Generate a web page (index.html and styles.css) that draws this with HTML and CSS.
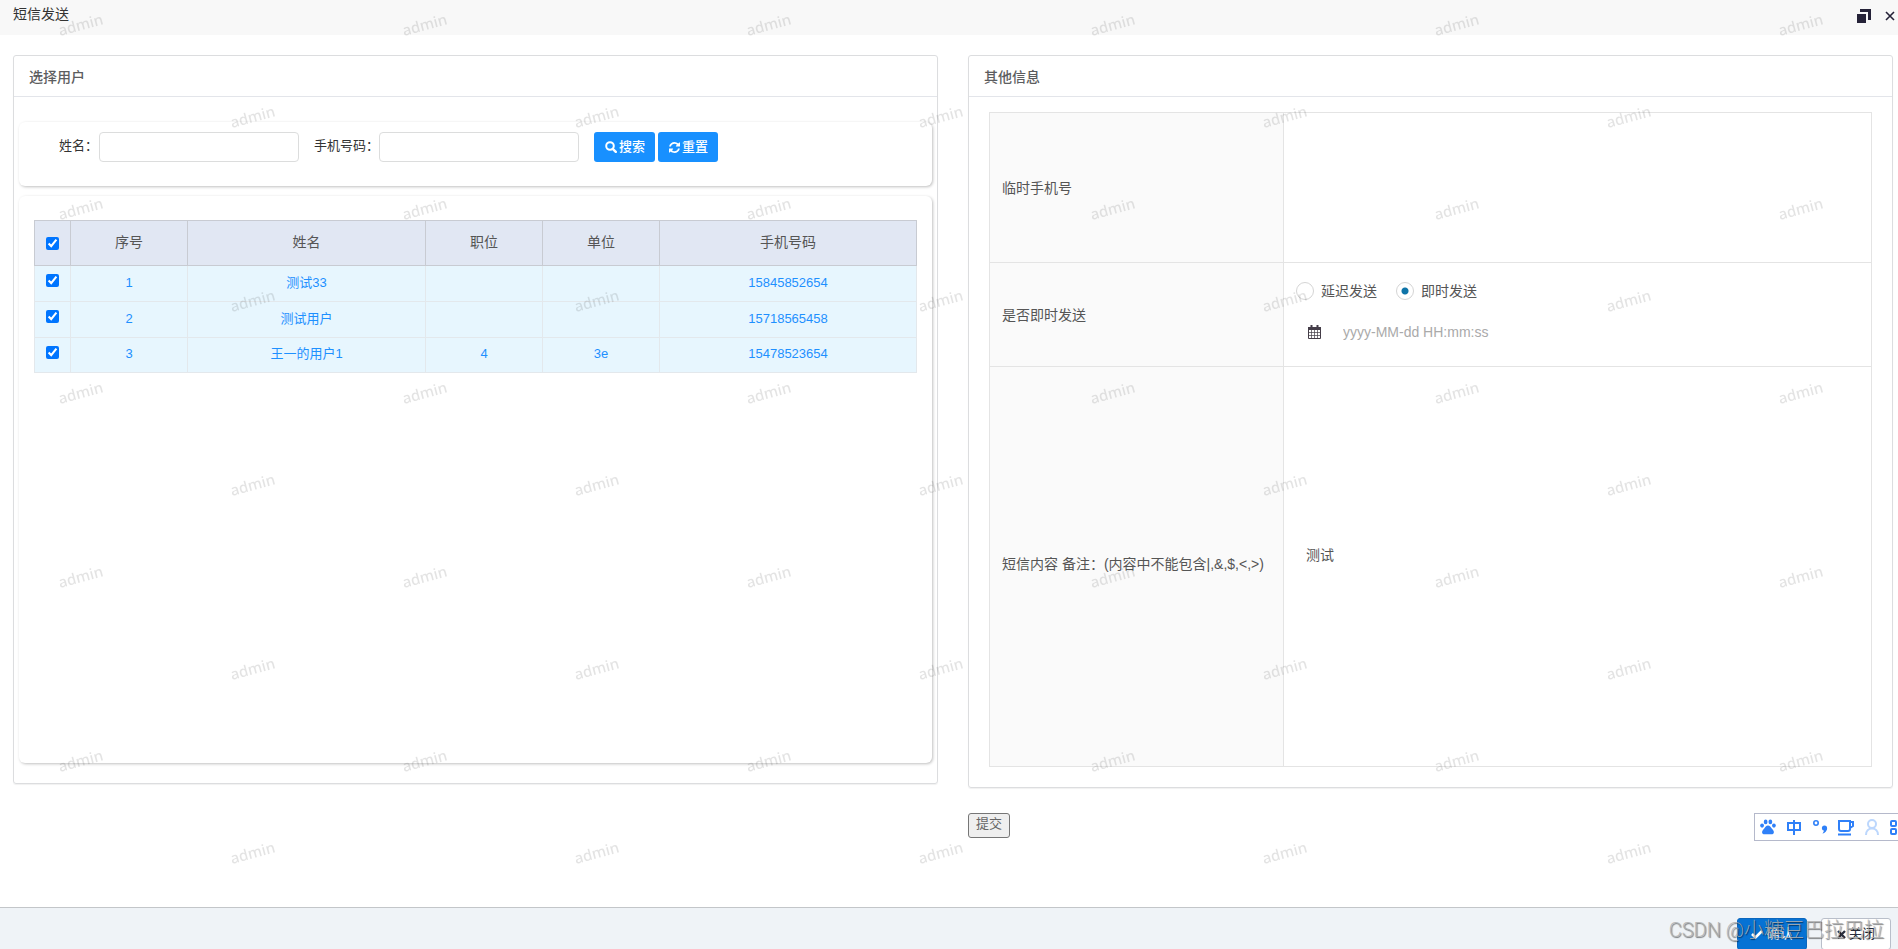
FILE: index.html
```html
<!DOCTYPE html>
<html lang="zh-CN">
<head>
<meta charset="utf-8">
<title>短信发送</title>
<link rel="stylesheet" href="styles.css">
</head>
<body>
<div class="window">
  <header class="titlebar">
    <h1 class="titlebar-text">短信发送</h1>
    <div class="titlebar-tools">
      <button class="tool" type="button" aria-label="还原"><svg width="14" height="14" viewBox="0 0 14 14"><path d="M0 5h9v9H0zM3 0h11v11h-3V3H3z" fill="#252238"/></svg></button>
      <button class="tool" type="button" aria-label="关闭"><svg width="10" height="10" viewBox="0 0 10 10"><path d="M1 1l8 8M9 1L1 9" stroke="#252238" stroke-width="1.600" fill="none"/></svg></button>
    </div>
  </header>

  <main class="content">
    <section class="panel">
      <h2 class="panel-head">选择用户</h2>
      <div class="users">
        <form class="card search">
          <label for="name">姓名：</label>
          <input class="field" id="name" type="text">
          <label class="label-next" for="phone">手机号码：</label>
          <input class="field" id="phone" type="text">
          <div class="search-actions">
            <button class="btn" type="button"><svg width="12" height="12" viewBox="0 0 12 12" fill="none" stroke="#fff"><circle cx="5" cy="5" r="3.8" stroke-width="2"/><path d="M7.8 7.8l3 3" stroke-width="2.4" stroke-linecap="round"/></svg>搜索</button>
            <button class="btn" type="button"><svg width="11" height="11" viewBox="0 0 1536 1536" fill="#fff"><path d="M1511 928q0 5-1 7-64 268-268 434.500T764 1536q-146 0-282.500-55T238 1324l-129 129q-19 19-45 19t-45-19-19-45V960q0-26 19-45t45-19h448q26 0 45 19t19 45-19 45l-137 137q71 66 161 102t187 36q134 0 250-65t186-179q11-17 53-117 8-23 30-23h192q13 0 22.500 9.500t9.500 22.500zm25-800v448q0 26-19 45t-45 19h-448q-26 0-45-19t-19-45 19-45l138-138Q969 256 768 256q-134 0-250 65T332 500q-11 17-53 117-8 23-30 23H50q-13 0-22.500-9.500T18 608v-7q65-268 270-434.500T768 0q146 0 284 55.500T1297 212l130-129q19-19 45-19t45 19 19 45z"/></svg>重置</button>
          </div>
        </form>
        <div class="card list">
          <table class="grid">
            <colgroup><col class="c-check"><col class="c-mid"><col class="c-name"><col class="c-mid"><col class="c-mid"><col></colgroup>
            <thead>
              <tr><th><input type="checkbox" checked aria-label="全选"></th><th>序号</th><th>姓名</th><th>职位</th><th>单位</th><th>手机号码</th></tr>
            </thead>
            <tbody>
              <tr><td><input type="checkbox" checked aria-label="选择 1"></td><td>1</td><td>测试33</td><td></td><td></td><td>15845852654</td></tr>
              <tr><td><input type="checkbox" checked aria-label="选择 2"></td><td>2</td><td>测试用户</td><td></td><td></td><td>15718565458</td></tr>
              <tr><td><input type="checkbox" checked aria-label="选择 3"></td><td>3</td><td>王一的用户1</td><td>4</td><td>3e</td><td>15478523654</td></tr>
            </tbody>
          </table>
        </div>
      </div>
    </section>

    <div class="right">
      <section class="panel">
        <h2 class="panel-head">其他信息</h2>
        <table class="info">
          <colgroup><col class="c-label"><col></colgroup>
          <tr class="row-phone"><th scope="row"><label for="temp">临时手机号</label></th><td><textarea class="bare" id="temp"></textarea></td></tr>
          <tr class="row-time"><th scope="row">是否即时发送</th><td>
            <div class="radios">
              <label class="radio"><input type="radio" name="when">延迟发送</label>
              <label class="radio"><input type="radio" name="when" checked>即时发送</label>
            </div>
            <div class="date">
              <svg width="13" height="14" viewBox="0 0 13 14"><path d="M.5 3h12v10.500H.5z" fill="none" stroke="#443d48"/><path d="M1 7.500h11M1 10.500h11M3.500 5v8M6.500 5v8M9.500 5v8" fill="none" stroke="#443d48" stroke-width=".7"/><path d="M0 2h13v3H0zM2.500 0h2v3h-2zM8.500 0h2v3h-2z" fill="#443d48"/></svg>
              <input class="bare" type="text" placeholder="yyyy-MM-dd HH:mm:ss" aria-label="发送时间">
            </div>
          </td></tr>
          <tr class="row-text"><th scope="row"><label for="text">短信内容 备注：(内容中不能包含|,&amp;,$,&lt;,&gt;)</label></th><td><input class="bare message" id="text" type="text" value="测试"></td></tr>
        </table>
      </section>
      <button class="submit" type="button">提交</button>
    </div>
  </main>

  <svg class="watermark" aria-hidden="true">
    <defs>
      <pattern id="mark" width="344" height="184" patternUnits="userSpaceOnUse">
        <text class="mark-text" transform="translate(82 30) rotate(-15)">admin</text>
        <text class="mark-text" transform="translate(254 122) rotate(-15)">admin</text>
      </pattern>
    </defs>
    <rect width="100%" height="100%" fill="url(#mark)"/>
  </svg>

  <div class="ime">
    <svg width="16" height="17" viewBox="0 0 17 17" fill="#2f80f8"><ellipse cx="2.200" cy="6.500" rx="2" ry="2.300"/><ellipse cx="6" cy="2.600" rx="2" ry="2.500"/><ellipse cx="11" cy="2.600" rx="2" ry="2.500"/><ellipse cx="14.800" cy="6.500" rx="2" ry="2.300"/><path d="M8.500 6.500c2 0 2.800 1.800 4.200 3.200 3 2.600 2.600 6-.4 6H4.700c-3 0-3.400-3.400-.4-6C5.700 8.300 6.500 6.500 8.500 6.500z"/></svg>
    <svg width="16" height="17" viewBox="0 0 16 17" fill="none" stroke="#2f80f8" stroke-width="2"><path d="M2 4h12v7H2zM8 1v15"/></svg>
    <svg width="16" height="17" viewBox="0 0 16 17" fill="#2f80f8"><circle cx="4" cy="4" r="2.200" fill="none" stroke="#2f80f8" stroke-width="1.600"/><circle cx="12.500" cy="9" r="2.600"/><path d="M15.100 9q0 4-4.600 5.800Q12.500 12 12 10z"/></svg>
    <svg width="16" height="17" viewBox="0 0 16 17" fill="none" stroke="#2f80f8" stroke-width="2"><path d="M1 2h11v8q0 2-2 2H3q-2 0-2-2zM12 3h3v4l-3 2M0 15.500h13"/></svg>
    <svg width="16" height="17" viewBox="0 0 16 17" fill="none" stroke="#bcd7fd" stroke-width="2"><circle cx="8" cy="5" r="4"/><path d="M2 16c0-4 2.500-6.500 6-6.500s6 2.500 6 6.500"/></svg>
    <svg width="16" height="17" viewBox="0 0 16 17" fill="none" stroke="#2f80f8" stroke-width="2"><rect x="1" y="2" width="5" height="5" rx="1"/><rect x="1" y="10" width="5" height="5" rx="1"/><rect x="9" y="2" width="5" height="5" rx="1"/><rect x="9" y="10" width="5" height="5" rx="1"/></svg>
  </div>

  <footer class="footer">
    <button class="foot-btn primary" type="button"><svg width="12" height="12" viewBox="0 0 12 12"><path d="M1 6l3.500 3.500L11 3" fill="none" stroke="#fff" stroke-width="2.600"/></svg>确认</button>
    <button class="foot-btn" type="button"><svg width="9" height="9" viewBox="0 0 9 9"><path d="M1 1l7 7M8 1L1 8" stroke="#2b2f3d" stroke-width="2.400"/></svg>关闭</button>
    <span class="credit">CSDN @小糖豆巴拉巴拉</span>
  </footer>
</div>
</body>
</html>
```
FILE: styles.css
```css
* { box-sizing: border-box; }
body {
  margin: 0;
  overflow: hidden;
  color: #333;
  background: #fff;
  font: 13px/20px "Liberation Sans", "Noto Sans CJK SC", sans-serif;
}
button, input, textarea { font: inherit; color: inherit; }
.window { position: relative; display: flex; flex-direction: column; height: 100vh; overflow: hidden; }

.titlebar { flex: none; display: flex; justify-content: space-between; height: 35px; padding: 4px 3px 0 13px; background: #f8f8f8; }
.titlebar-text { margin: 0; font-size: 14px; font-weight: 400; }
.titlebar-tools { display: flex; gap: 14px; align-items: center; height: 24px; }
.tool { display: flex; padding: 0; border: 0; background: none; }

.content { flex: 1; min-height: 0; display: grid; grid-template-columns: 1fr 1fr; gap: 30px; align-items: start; padding: 20px 5px 0 13px; }
.panel { border: 1px solid #dcdddf; border-radius: 3px; box-shadow: 0 1px 1px rgba(0,0,0,.06); }
.panel-head { margin: 0; padding: 11px 15px 9px; border-bottom: 1px solid #e3e5ea; color: #5c5d60; font-size: 14px; font-weight: 500; }

.users { padding: 25px 5px 20px; }
.card { border-radius: 6px; box-shadow: 1px 1px 3px rgba(0,0,0,.25); }
.search { display: flex; align-items: flex-start; height: 64px; margin-bottom: 10px; padding: 10px 40px; }
.search label { padding: 4px 1px 0 0; }
.search .label-next { margin-left: 15px; padding-right: 0; }
.field { width: 200px; height: 30px; padding: 0 8px; border: 1px solid #dcdddd; border-radius: 4px; background: #fff; }
.search-actions { display: flex; gap: 3px; margin-left: 15px; }
.btn { display: flex; align-items: center; gap: 2px; height: 30px; padding: 0 10px 0 11px; border: 0; border-radius: 3px; background: #1890ff; color: #fff; font-weight: 500; }
.list { min-height: 567px; padding: 24px 15px; }

.grid { width: 100%; border-collapse: collapse; table-layout: fixed; text-align: center; }
.c-check { width: 36px; }
.c-mid { width: 117px; }
.c-name { width: 238px; }
.grid th { height: 45px; padding: 0 0 2px; border: 1px solid #c8cbd2; background: #e1e7f3; color: #555; font-size: 14px; font-weight: 400; }
.grid th:first-child { padding: 0; }
.grid td { height: 36px; padding: 0 0 2px; border: 1px solid #e3e8ec; background: #e7f6fe; color: #1e90ff; }
.grid tr:last-child td { height: 35px; }
.grid td:first-child { padding-bottom: 6px; }
.grid input { display: block; width: 13px; height: 13px; margin: 0 auto; }

.info { width: calc(100% - 40px); margin: 15px 20px 20px; border-collapse: collapse; table-layout: fixed; color: #555; font-size: 14px; }
.info th, .info td { border: 1px solid #e4e4e4; font-weight: 400; text-align: left; }
.info th { padding: 0 12px; background: #fafafa; white-space: nowrap; }
.info td { padding: 0 12px; }
.c-label { width: 294px; }
.row-phone { height: 150px; }
.row-time { height: 104px; }
.row-text { height: 400px; }
.info .row-time td { padding-bottom: 6px; }
.info .row-text th { padding-bottom: 5px; }
.bare { display: block; width: 100%; padding: 0; border: 0; outline: 0; background: none; resize: none; }
.bare::placeholder { color: #aaa; opacity: 1; }
.message { padding: 0 10px; margin-bottom: 24px; }
.radios { display: flex; gap: 19px; }
.radio { display: flex; align-items: center; gap: 7px; }
.radio input { appearance: none; width: 18px; height: 18px; margin: 0; border: 1px solid #d5d5d5; border-radius: 50%; background: #fff; }
.radio input:checked { background: radial-gradient(circle, #0f74a8 3px, #fff 4px); }
.date { display: flex; align-items: center; gap: 22px; margin-top: 21px; padding-left: 12px; }
.date svg { flex: none; }

.submit { display: block; height: 25px; margin-top: 25px; padding: 0 7px 3px; border: 1px solid #767676; border-radius: 3px; background: #efefef; color: #666; line-height: 20px; }

.watermark { position: absolute; inset: 0; width: 100%; height: 100%; pointer-events: none; }
.mark-text { fill: #000; fill-opacity: .11; font: 500 15px "Noto Sans", sans-serif; text-anchor: middle; }

.ime { position: absolute; right: -9px; bottom: 108px; display: flex; align-items: center; gap: 10px; height: 28px; padding: 0 0 0 5px; border: 1px solid #b5b9cb; background: #fff; }

.footer { position: relative; flex: none; display: flex; gap: 14px; justify-content: flex-end; height: 42px; padding: 10px 7px 0; border-top: 1px solid #c3c6c9; background: #eff3f7; }
.foot-btn { display: flex; align-items: center; justify-content: center; gap: 3px; width: 70px; height: 32px; border: 1px solid #b9bfca; border-radius: 3px; background: #fff; color: #2b2f3d; }
.primary { border-color: #0b66bd; background: #0672d4; color: #fff; }
.credit { position: absolute; right: 14px; top: 9px; color: rgba(175,175,175,.85); font: 300 20px/26px Roboto, "Noto Sans CJK SC", sans-serif; text-shadow: 1px 1px 1px rgba(0,0,0,.5); white-space: nowrap; pointer-events: none; }
```
